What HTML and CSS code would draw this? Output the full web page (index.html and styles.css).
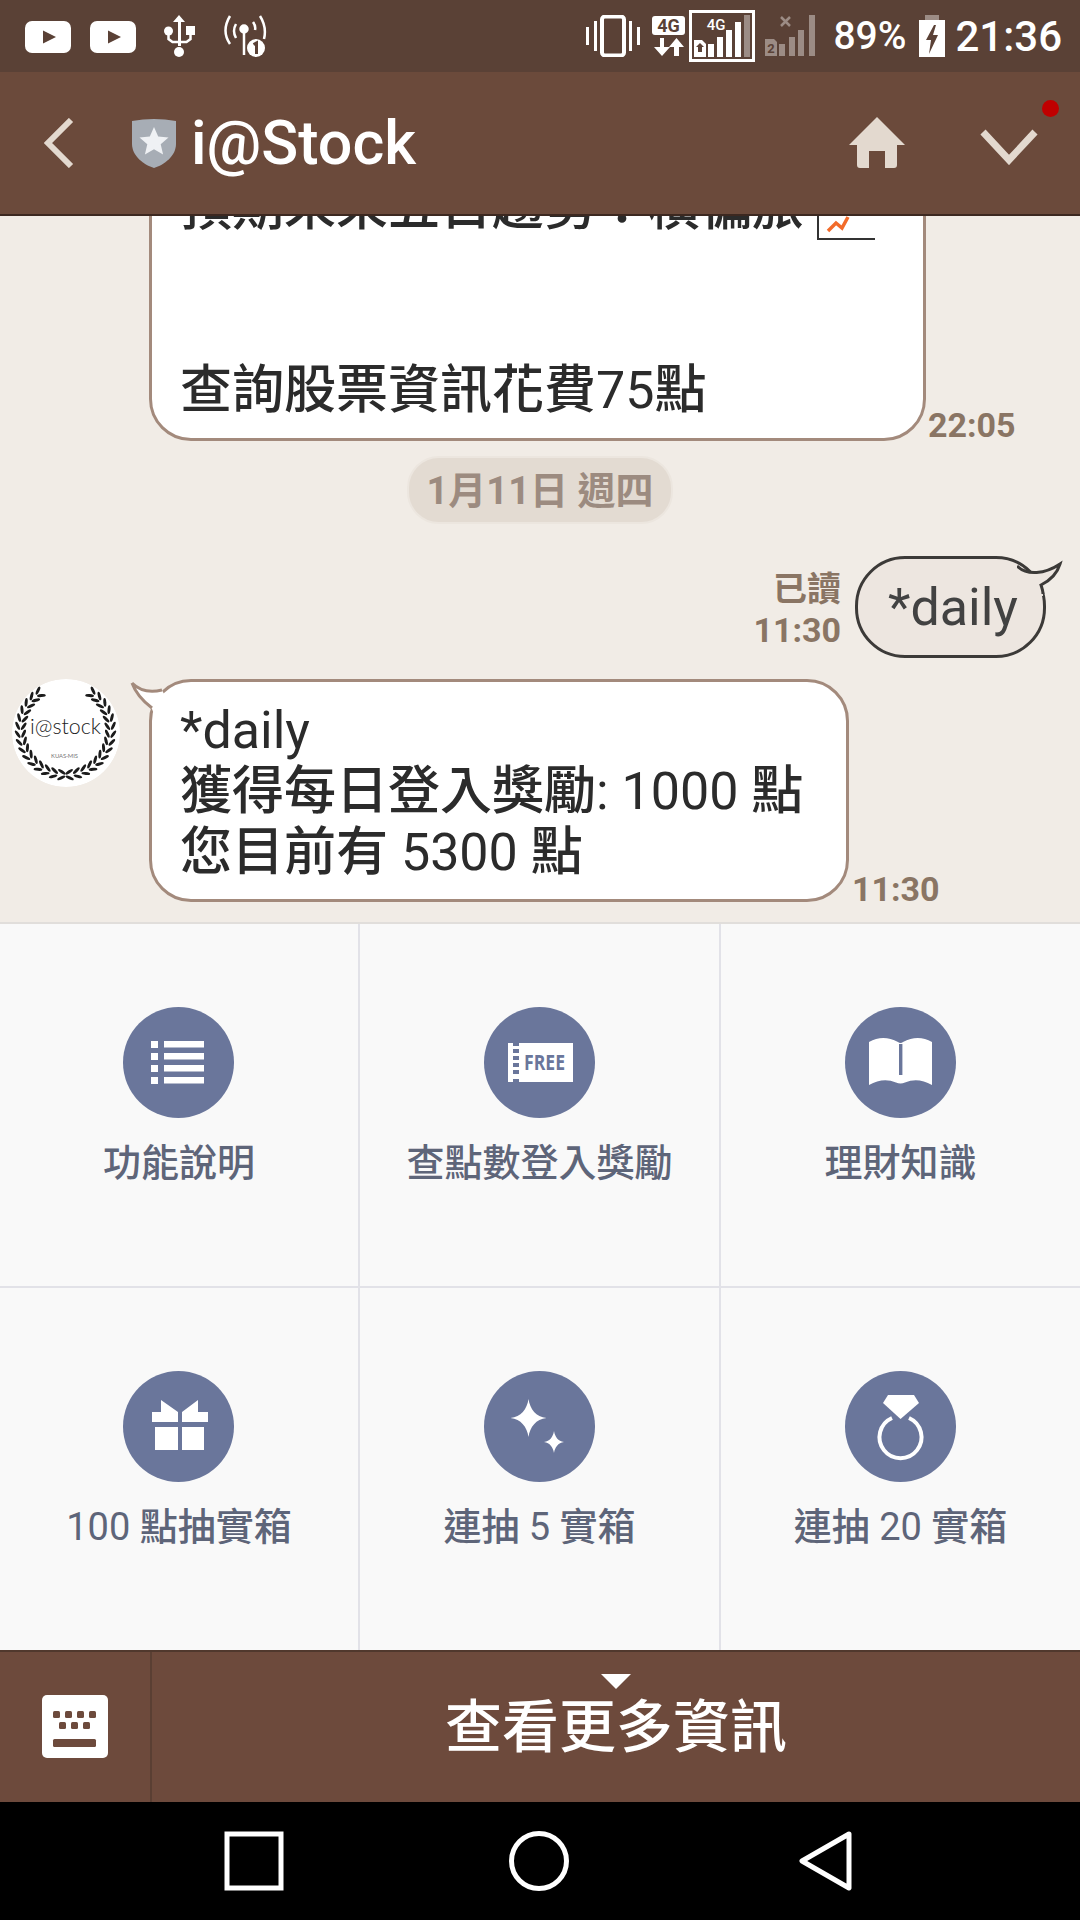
FILE: index.html
```html
<!doctype html>
<html lang="zh-Hant">
  <head>
    <meta charset="utf-8">
    <title>i@Stock</title>
    <link rel="stylesheet" href="styles.css">
  </head>
  <body>
    <div class="app">

      <div class="status">
        <div class="status-left">
          <div class="yt-pair">
            <svg width="46" height="32" viewBox="0 0 46 32"><rect width="46" height="32" rx="7" fill="#fff"/><path d="M18 9.500 31 16 18 22.500z" fill="#5a4136"/></svg>
            <svg width="46" height="32" viewBox="0 0 46 32"><rect width="46" height="32" rx="7" fill="#fff"/><path d="M18 9.500 31 16 18 22.500z" fill="#5a4136"/></svg>
          </div>
          <svg width="31" height="42" viewBox="0 0 31 42"><path d="M15 0l6 7h-4v24h-3V7H9z" fill="#fff"/><circle cx="15" cy="37" r="5" fill="#fff"/><circle cx="4.500" cy="16" r="4.500" fill="#fff"/><rect x="22" y="11" width="9" height="9" fill="#fff"/><path d="M4.500 18v6l4 3h14l4-3v-6" fill="none" stroke="#fff" stroke-width="2.500"/></svg>
          <svg width="44" height="42" viewBox="0 0 44 42" fill="none" stroke="#fff" stroke-width="2.500"><path d="M7 1Q-2 16 7 29"/><path d="M13 9Q9 16 13 23"/><path d="M37 1Q44 12 41 24"/><path d="M30 7Q33 11 32 15"/><circle cx="21" cy="14" r="3.500" fill="#fff"/><path d="M21 16V40"/><circle cx="33" cy="33" r="9" fill="#fff" stroke="none"/><path d="M30.500 29.500l3-1.500v11" stroke="#5a4136" stroke-width="3"/></svg>
        </div>
        <div class="status-right">
          <svg class="ic-vibrate" width="54" height="42" viewBox="0 0 54 42" fill="#fff"><rect x="0" y="12" width="3" height="18"/><rect x="8" y="6" width="3" height="30"/><rect x="43" y="6" width="3" height="30"/><rect x="51" y="12" width="3" height="18"/><rect x="16" y="1.500" width="22" height="39" rx="3" fill="none" stroke="#fff" stroke-width="4"/></svg>
          <svg class="ic-data" width="33" height="40" viewBox="0 0 33 40"><rect width="33" height="19" rx="3" fill="#fff"/><text x="16.500" y="16" text-anchor="middle" class="tiny-bold" fill="#5a4136">4G</text><path d="M8 22v9H2l8 9 8-9h-6v-9zM22 40v-9h-5l7.500-9 7.500 9h-5v9z" fill="#fff"/></svg>
          <svg class="ic-sim-box" width="66" height="52" viewBox="0 0 66 52">
            <rect x="1.500" y="1.500" width="63" height="49" fill="none" stroke="#fff" stroke-width="3"/>
            <text x="27" y="20" text-anchor="middle" class="tiny" fill="#fff">4G</text>
            <path d="M5 30h8l4 4v13H5z" fill="#fff"/><path d="M11 33l4 4h-2v5h-4v-5H7z" fill="#5a4136"/>
            <rect x="19" y="34" width="6" height="13" fill="#fff"/><rect x="28" y="27" width="6" height="20" fill="#fff"/><rect x="37" y="20" width="6" height="27" fill="#fff"/><rect x="46" y="12" width="6" height="35" fill="#fff"/><rect x="55" y="5" width="6" height="42" fill="#9c8c85"/>
          </svg>
          <svg class="ic-sim2" width="56" height="44" viewBox="0 0 56 44" fill="#9c8c85">
            <path d="M16 3l9 9M25 3l-9 9" stroke="#9c8c85" stroke-width="2.500"/>
            <path d="M0 25h9l3 3v14H0z"/><rect x="14" y="30" width="6" height="12"/><rect x="24" y="23" width="6" height="19"/><rect x="33" y="16" width="6" height="26"/><rect x="44" y="1" width="6" height="41"/>
            <text x="6" y="39" text-anchor="middle" class="tiny-sim" fill="#5a4136">2</text>
          </svg>
          <span class="battery-pct">89%</span>
          <svg class="ic-battery" width="26" height="42" viewBox="0 0 26 42"><rect x="6" y="0" width="14" height="6" fill="#9c8c85"/><rect y="5" width="26" height="37" fill="#fff"/><path d="M15 10l-8 15h5l-2 14 9-19h-5l3-10z" fill="#5a4136"/></svg>
          <span class="clock">21:36</span>
        </div>
      </div>

      <div class="header">
        <svg class="ic-back" width="30" height="50" viewBox="0 0 30 50"><path d="M27 2 4 25l23 23" fill="none" stroke="#e3d9cf" stroke-width="6"/></svg>
        <svg class="ic-shield" width="44" height="50" viewBox="0 0 44 50"><path d="M0 3Q22-1 44 3V26C44 38 32 47 22 50 12 47 0 38 0 26z" fill="#a7adb5"/><path d="M22 9l4.200 9.500 10.300 1-7.800 6.800 2.400 10.200L22 31.200l-9.100 5.300 2.400-10.200-7.800-6.800 10.300-1z" fill="#eff1f4"/></svg>
        <span class="title">i@Stock</span>
        <svg class="ic-home" width="56" height="52" viewBox="0 0 56 52"><path d="M28 0 56 28H48V48a3 3 0 0 1-3 3H36V34H20V51H11a3 3 0 0 1-3-3V28H0z" fill="#e3d9cf"/></svg>
        <div class="menu-btn">
          <svg width="58" height="36" viewBox="0 0 58 36"><path d="M3 3 29 31 55 3" fill="none" stroke="#e3d9cf" stroke-width="7"/></svg>
          <span class="red-dot"></span>
        </div>
      </div>

      <div class="chat">
        <div class="msg msg-first">
          <div class="bubble bubble-wide">預期未來五日趨勢：橫偏旅<svg class="chart-emoji" width="58" height="50" viewBox="0 0 58 50"><path d="M1 0V49H58" fill="none" stroke="#333" stroke-width="2"/><path d="M11 41l8-8 6 5 6-11" fill="none" stroke="#f26b2a" stroke-width="3.500"/></svg><br><br><br>查詢股票資訊花費<span class="lat">75</span>點</div>
          <span class="time">22:05</span>
        </div>

        <div class="date-wrap"><span class="date-pill">1月11日 週四</span></div>

        <div class="msg msg-me">
          <div class="meta">
            <span>已讀</span>
            <span class="time">11:30</span>
          </div>
          <div class="bubble-me"><span class="lat">*daily</span>
            <svg class="tail-me" width="46" height="44" viewBox="0 0 46 44"><path d="M0 14C10 24 28 22 43 12 40 22 32 29 24 33 25 36 26 39 26 44H0z" fill="#ede6e0"/><path d="M0 14C10 24 28 22 43 12 40 22 32 29 24 33 25 36 26 39 26 42" fill="none" stroke="#3c3a38" stroke-width="3"/></svg>
          </div>
        </div>

        <div class="msg msg-bot">
          <svg class="avatar" width="108" height="108" viewBox="0 0 108 108">
            <defs>
              <g id="leaf-pair" fill="#1c1c1c">
                <ellipse cx="53.500" cy="99" rx="4.400" ry="1.500" transform="rotate(-30 53.500 99)"/>
                <ellipse cx="53.500" cy="93" rx="4.400" ry="1.500" transform="rotate(30 53.500 93)"/>
              </g>
              <g id="wreath-side">
                <use href="#leaf-pair" transform="rotate(5 53.500 51)"/>
                <use href="#leaf-pair" transform="rotate(15 53.500 51)"/>
                <use href="#leaf-pair" transform="rotate(25 53.500 51)"/>
                <use href="#leaf-pair" transform="rotate(35 53.500 51)"/>
                <use href="#leaf-pair" transform="rotate(45 53.500 51)"/>
                <use href="#leaf-pair" transform="rotate(55 53.500 51)"/>
                <use href="#leaf-pair" transform="rotate(65 53.500 51)"/>
                <use href="#leaf-pair" transform="rotate(75 53.500 51)"/>
                <use href="#leaf-pair" transform="rotate(85 53.500 51)"/>
                <use href="#leaf-pair" transform="rotate(95 53.500 51)"/>
                <use href="#leaf-pair" transform="rotate(105 53.500 51)"/>
                <use href="#leaf-pair" transform="rotate(115 53.500 51)"/>
                <use href="#leaf-pair" transform="rotate(125 53.500 51)"/>
                <use href="#leaf-pair" transform="rotate(135 53.500 51)"/>
                <use href="#leaf-pair" transform="rotate(145 53.500 51)"/>
              </g>
            </defs>
            <circle cx="54" cy="54" r="54" fill="#fff"/>
            <use href="#wreath-side"/>
            <use href="#wreath-side" transform="translate(107 0) scale(-1 1)"/>
            <text x="18" y="55" textLength="71" lengthAdjust="spacingAndGlyphs" class="avatar-name">i@stock</text>
            <text x="39" y="79" textLength="27" lengthAdjust="spacingAndGlyphs" class="avatar-sub">KUAS·MIS</text>
          </svg>
          <div class="bubble bubble-bot"><span class="lat">*daily</span><br>獲得每日登入獎勵<span class="lat">: 1000 </span>點<br>您目前有<span class="lat"> 5300 </span>點
            <svg class="tail-bot" width="60" height="50" viewBox="0 0 60 50"><path d="M2 7C10 15 20 17 32 14L40 30 24 38 22 33C14 26 6 18 2 7z" fill="#fff"/><path d="M2 7C10 15 20 17 32 14M2 7C6 18 14 26 22 32" fill="none" stroke="#a38a7c" stroke-width="3"/></svg>
          </div>
          <span class="time">11:30</span>
        </div>
      </div>

      <div class="menu-grid">
        <div class="cell">
          <svg class="cell-icon" width="111" height="111" viewBox="0 0 111 111"><circle cx="55.500" cy="55.500" r="55.500" fill="#6a769b"/><path d="M28 34h7v7h-7zM41 34h40v6.500H41zM28 46h7v7h-7zM41 46h40v6.500H41zM28 58h7v7h-7zM41 58h40v6.500H41zM28 70h7v7h-7zM41 70h40v6.500H41z" fill="#fff"/></svg>
          <span>功能說明</span>
        </div>
        <div class="cell">
          <svg class="cell-icon" width="111" height="111" viewBox="0 0 111 111"><circle cx="55.500" cy="55.500" r="55.500" fill="#6a769b"/><path d="M24 36h5v3h6v-3h54v39H35v-3h-6v3h-5z" fill="#fff"/><path d="M29 42h6v4h-6zM29 49h6v4h-6zM29 56h6v4h-6zM29 63h6v4h-6z" fill="#6a769b"/><text x="40" y="63" textLength="41" lengthAdjust="spacingAndGlyphs" class="free-text">FREE</text></svg>
          <span>查點數登入獎勵</span>
        </div>
        <div class="cell">
          <svg class="cell-icon" width="111" height="111" viewBox="0 0 111 111"><circle cx="55.500" cy="55.500" r="55.500" fill="#6a769b"/><path d="M24 35Q38 27 53 35 54 36 55.500 36 57 36 58 35 73 27 87 35V78Q73 70 60 75.500 55.500 77.500 51 75.500 38 70 24 78z" fill="#fff"/><rect x="54" y="37" width="3.400" height="31" fill="#6a769b"/></svg>
          <span>理財知識</span>
        </div>
        <div class="cell">
          <svg class="cell-icon" width="111" height="111" viewBox="0 0 111 111"><circle cx="55.500" cy="55.500" r="55.500" fill="#6a769b"/><path d="M38 29 55 41V51H29V41h9zM75 29 59 41V51H85V41H75zM32 56H55V79H32zM59 56H81V79H59z" fill="#fff"/></svg>
          <span><span class="lat">100 </span>點抽實箱</span>
        </div>
        <div class="cell">
          <svg class="cell-icon" width="111" height="111" viewBox="0 0 111 111"><circle cx="55.500" cy="55.500" r="55.500" fill="#6a769b"/><path d="M44.500 28C46 38 52 46 62.500 47 52 48 46 56 44.500 66 43 56 37 48 26.500 47 37 46 43 38 44.500 28zM70 60C71 66 74 70 80 71 74 72 71 76 70 82 69 76 66 72 60 71 66 70 69 66 70 60z" fill="#fff"/></svg>
          <span>連抽<span class="lat"> 5 </span>實箱</span>
        </div>
        <div class="cell">
          <svg class="cell-icon" width="111" height="111" viewBox="0 0 111 111"><circle cx="55.500" cy="55.500" r="55.500" fill="#6a769b"/><path d="M43 24H69L74 32 55.500 48 38 32z" fill="#fff"/><path d="M47 47A21 21 0 1 0 64 47" fill="none" stroke="#fff" stroke-width="4"/></svg>
          <span>連抽<span class="lat"> 20 </span>實箱</span>
        </div>
      </div>

      <div class="bottom-bar">
        <div class="kb-cell">
          <svg width="66" height="63" viewBox="0 0 66 63"><rect width="66" height="63" rx="5" fill="#fff"/><g fill="#6d4a3c"><rect x="11" y="16" width="7" height="7" rx="1.500"/><rect x="23" y="16" width="7" height="7" rx="1.500"/><rect x="35" y="16" width="7" height="7" rx="1.500"/><rect x="47" y="16" width="7" height="7" rx="1.500"/><rect x="17" y="27" width="7" height="7" rx="1.500"/><rect x="29" y="27" width="7" height="7" rx="1.500"/><rect x="41" y="27" width="7" height="7" rx="1.500"/><rect x="11" y="44" width="43" height="8" rx="1.500"/></g></svg>
        </div>
        <div class="more-cell">
          <span class="more-arrow"></span>
          <span class="more-label">查看更多資訊</span>
        </div>
      </div>

      <div class="nav">
        <svg width="60" height="60" viewBox="0 0 60 60"><rect x="3" y="3" width="54" height="54" fill="none" stroke="#fff" stroke-width="5"/></svg>
        <svg width="60" height="60" viewBox="0 0 60 60"><circle cx="30" cy="30" r="27.500" fill="none" stroke="#fff" stroke-width="5"/></svg>
        <svg class="nav-back" width="53" height="60" viewBox="0 0 53 60"><path d="M50 3 3 30l47 27z" fill="none" stroke="#fff" stroke-width="5" stroke-linejoin="round"/></svg>
      </div>

    </div>
  </body>
</html>
```

FILE: styles.css
```css
* {box-sizing: border-box;}

html, body {margin: 0; padding: 0;}

body {
  font-family: Roboto, "Noto Sans CJK TC", sans-serif;
  background: #000;
}

svg {display: block; flex: none;}

.lat {font-weight: 400;}

.app {
  width: 1080px;
  height: 1920px;
  display: flex;
  flex-direction: column;
  overflow: hidden;
}

/* status bar */
.status {
  height: 72px;
  flex: none;
  background: #5a4136;
  display: flex;
  align-items: center;
  justify-content: space-between;
  padding: 0 18px 0 25px;
  color: #fff;
}
.status-left {display: flex; align-items: center; gap: 28px;}
.yt-pair {display: flex; gap: 19px; margin-top: 1px;}
.status-right {display: flex; align-items: center;}
.ic-data {margin-left: 12px;}
.ic-sim-box {margin-left: 4px;}
.ic-sim2 {margin-left: 10px;}
.battery-pct {font-size: 39px; font-weight: 500; margin-left: 12px;}
.ic-battery {margin-left: 13px;}
.clock {font-size: 42px; font-weight: 500; margin-left: 10px;}
.tiny {font: 500 15px "Liberation Sans Narrow", Roboto, sans-serif;}
.tiny-bold {font: 700 18px Roboto, sans-serif;}
.tiny-sim {font: 700 13px Roboto, sans-serif;}

/* title bar */
.header {
  height: 144px;
  flex: none;
  background: #6b4a3b;
  border-bottom: 2px solid #3c2820;
  display: flex;
  align-items: center;
  padding-left: 44px;
}
.ic-shield {margin-left: 58px;}
.title {
  font-size: 61px;
  font-weight: 500;
  color: #fff;
  margin-left: 15px;
  flex: 1;
}
.ic-home {margin-right: 75px;}
.menu-btn {position: relative; margin-right: 42px; margin-top: 8px;}
.red-dot {
  position: absolute;
  right: -21px;
  top: -29px;
  width: 17px;
  height: 17px;
  border-radius: 50%;
  background: #c00000;
}

/* chat */
.chat {
  flex: 1;
  min-height: 0;
  overflow: hidden;
  background: #f1ece6;
  display: flex;
  flex-direction: column;
  justify-content: flex-end;
  padding-bottom: 20px;
}
.msg {display: flex; align-items: flex-end; flex: none;}
.msg-first {padding-left: 149px;}
.msg-me {justify-content: flex-end; padding-right: 34px; margin-top: 32px;}
.msg-bot {padding-left: 12px; margin-top: 21px; align-items: flex-start;}

.bubble {
  position: relative;
  background: #fff;
  border: 3px solid #a38a7c;
  border-radius: 42px;
  padding: 16px 20px 17px 28px;
  font-size: 52px;
  font-weight: 500;
  line-height: 61px;
  color: #2b2b2b;
}
.bubble-wide {width: 777px; flex: none;}
.bubble-bot {width: 700px; margin-left: 29px; flex: none; padding-top: 18px; padding-bottom: 16px;}

.chart-emoji {display: inline-block; position: relative; top: 7px; margin-left: 13px; vertical-align: -8px;}

.time {
  font-size: 34px;
  font-weight: 700;
  line-height: 34px;
  color: #8a7564;
}
.msg-first .time {margin: 0 0 -1px 2px;}
.msg-bot .time {margin: 0 0 -4px 3px; align-self: flex-end;}

.date-wrap {display: flex; justify-content: center; margin-top: 15px; flex: none;}
.date-pill {
  height: 68px;
  padding: 0 18px;
  border: 2px solid #ece6df;
  border-radius: 32px;
  background: #e3dbd2;
  color: #9c8b80;
  font-size: 38px;
  font-weight: 700;
  line-height: 66px;
}

.meta {
  display: flex;
  flex-direction: column;
  align-items: flex-end;
  margin: 0 14px 9px 0;
  font-size: 34px;
  line-height: 46px;
  color: #8a7564;
  font-weight: 700;
}
.meta .time {line-height: 37px;}

.bubble-me {
  position: relative;
  width: 191px;
  height: 102px;
  background: #ede6e0;
  border: 3px solid #3c3a38;
  border-radius: 50px;
  padding-left: 30px;
  font-size: 52px;
  font-weight: 500;
  line-height: 98px;
  color: #424242;
}
.tail-me {position: absolute; right: -20px; top: -7px;}

.avatar {border-radius: 50%;}
.avatar-name {font: 300 22px Lato, sans-serif; fill: #222;}
.avatar-sub {font: 400 6px Lato, sans-serif; fill: #777;}
.tail-bot {position: absolute; left: -22px; top: -6px;}

/* rich menu */
.menu-grid {
  height: 728px;
  flex: none;
  display: grid;
  grid-template-columns: 360px 361px 359px;
  grid-template-rows: 364px 362px;
  background: #f9f9f9;
  border-top: 2px solid #e1dedb;
}
.cell {
  display: flex;
  flex-direction: column;
  align-items: center;
  padding-top: 83px;
  border-right: 2px solid #e2e2e8;
  font-size: 38px;
  font-weight: 500;
  line-height: 50px;
  color: #5e6579;
}
.cell:nth-child(3n) {border-right: 0;}
.cell:nth-child(-n+3) {border-bottom: 2px solid #e2e2e8;}
.cell:nth-child(3n+1) .cell-icon {margin-right: 1px;}
.cell-icon {margin-bottom: 20px;}
.free-text {font: 700 22px "Open Sans", sans-serif; fill: #6a769b;}

/* bottom bar */
.bottom-bar {
  height: 152px;
  flex: none;
  display: flex;
  background: #6d4a3c;
  border-top: 2px solid #50382d;
}
.kb-cell {
  width: 152px;
  flex: none;
  border-right: 2px solid #5a3f33;
  padding: 43px 0 0 42px;
}
.more-cell {
  flex: 1;
  display: flex;
  flex-direction: column;
  align-items: center;
  padding-top: 22px;
}
.more-arrow {
  width: 0;
  height: 0;
  border-left: 15px solid transparent;
  border-right: 15px solid transparent;
  border-top: 15px solid #fff;
}
.more-label {
  font-size: 57px;
  line-height: 70px;
  font-weight: 500;
  color: #fff;
  margin-top: 4px;
}

/* android nav */
.nav {
  height: 118px;
  flex: none;
  background: #000;
  display: flex;
  align-items: center;
  gap: 225px;
  padding-left: 224px;
}
.nav-back {margin-left: 5px;}
```
